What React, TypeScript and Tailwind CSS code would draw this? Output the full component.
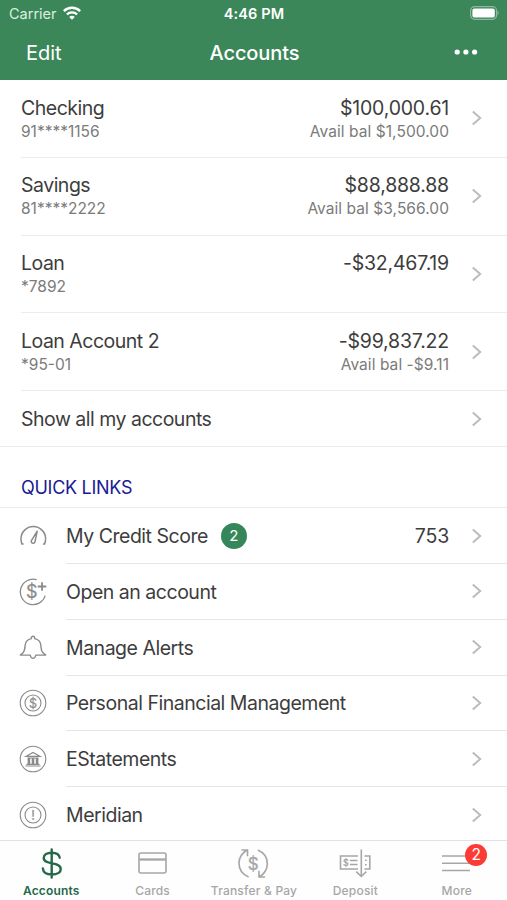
import React from "react";
import clsx from "clsx";

interface Account {
  name: string;
  number: string;
  balance: string;
  available?: string;
}

interface QuickLink {
  label: string;
  icon: React.ReactNode;
  badge?: number;
  value?: string;
}

interface Tab {
  label: string;
  icon: React.ReactNode;
  active?: boolean;
  badge?: number;
}

const accounts: Account[] = [
  {
    name: "Checking",
    number: "91****1156",
    balance: "$100,000.61",
    available: "Avail bal $1,500.00",
  },
  {
    name: "Savings",
    number: "81****2222",
    balance: "$88,888.88",
    available: "Avail bal $3,566.00",
  },
  { name: "Loan", number: "*7892", balance: "-$32,467.19" },
  {
    name: "Loan Account 2",
    number: "*95-01",
    balance: "-$99,837.22",
    available: "Avail bal -$9.11",
  },
];

const Chevron = () => (
  <svg
    className="w-3 h-4 shrink-0 text-[#bcbcbe]"
    viewBox="0 0 12 16"
    fill="none"
    stroke="currentColor"
    strokeWidth="2"
  >
    <path d="M1.8 1.4 9.2 8 1.8 14.6" />
  </svg>
);

const LinkIcon = ({ children }: { children: React.ReactNode }) => (
  <svg
    className="w-7 h-7 shrink-0 text-[#8a8a8a]"
    viewBox="0 0 28 28"
    fill="none"
    stroke="currentColor"
    strokeWidth="1.1"
  >
    {children}
  </svg>
);

const GaugeIcon = () => (
  <LinkIcon>
    <path
      strokeWidth="1.5"
      d="M4.6 22H3C2.3 20.3 2 18.6 2 16.8a12.3 12.3 0 0 1 24.6 0c0 1.8-.3 3.5-1 5.2H24"
    />
    <path
      strokeWidth="1.5"
      strokeLinejoin="round"
      d="M18.2 9.200 12.400 18.600a1.900 1.900 0 1 0 3.500 1.500Z"
    />
  </LinkIcon>
);

const OpenAccountIcon = () => (
  <LinkIcon>
    <path d="M17.600 1.700A12.700 12.700 0 1 0 26.200 17.600" strokeWidth="1.3" />
    <path d="M23 4.200v8.600M18.700 8.500h8.600" strokeWidth="1.800" />
    <text
      x="12.900"
      y="20.300"
      textAnchor="middle"
      fontSize="18"
      fill="currentColor"
      stroke="currentColor"
      strokeWidth=".2"
    >
      $
    </text>
  </LinkIcon>
);

const BellIcon = () => (
  <LinkIcon>
    <path
      strokeLinejoin="round"
      strokeWidth="1.4"
      d="M14 2.2c1 0 1.600.7 1.600 1.500v.9C19.200 5.300 21.600 7.800 21.800 11c.3 4.300.8 5.900 1.700 7.200.8 1.100 2 1.800 3.200 2.900H17c-.6.3-.5 1.100-.9 1.900-.4.800-1.200 1.300-2.100 1.300s-1.700-.5-2.100-1.300c-.4-.8-.3-1.600-.9-1.900H1.300c1.200-1.100 2.400-1.800 3.200-2.900.9-1.300 1.400-2.900 1.700-7.200.2-3.200 2.600-5.700 6.200-6.400v-.9c0-.8.6-1.500 1.600-1.500Z"
    />
  </LinkIcon>
);

const CoinIcon = ({ sign }: { sign: string }) => (
  <LinkIcon>
    <circle cx="14" cy="14" r="12.800" />
    <circle cx="14" cy="14" r="8" />
    <text
      x="14"
      y="18.500"
      textAnchor="middle"
      fontSize="12.500"
      fill="currentColor"
      stroke="currentColor"
      strokeWidth=".2"
    >
      {sign}
    </text>
  </LinkIcon>
);

const BankIcon = () => (
  <LinkIcon>
    <circle cx="14" cy="14" r="12.800" />
    <path d="M6.800 11.400 14 7.400l7.200 4ZM7.500 19.400h13M6.500 21h15M8.500 13h11" />
    <path d="M9.900 13v6.200M14 13v6.200M18.100 13v6.200" strokeWidth="2.600" />
  </LinkIcon>
);

const TabIcon = ({ children }: { children: React.ReactNode }) => (
  <svg
    className="w-9 h-8"
    viewBox="0 0 36 32"
    fill="none"
    stroke="currentColor"
    strokeWidth="1.600"
  >
    {children}
  </svg>
);

const quickLinks: QuickLink[] = [
  { label: "My Credit Score", icon: <GaugeIcon />, badge: 2, value: "753" },
  { label: "Open an account", icon: <OpenAccountIcon /> },
  { label: "Manage Alerts", icon: <BellIcon /> },
  { label: "Personal Financial Management", icon: <CoinIcon sign="$" /> },
  { label: "EStatements", icon: <BankIcon /> },
  { label: "Meridian", icon: <CoinIcon sign="!" /> },
];

const tabs: Tab[] = [
  {
    label: "Accounts",
    active: true,
    icon: (
      <TabIcon>
        <path
          strokeWidth="2.400"
          strokeLinecap="round"
          d="M18.700 1.500v28M26.700 9.700c-.4-3-3.600-5-8-5-4.600 0-8 2-8 5.300 0 7.500 17 3.200 17 10.900 0 3.600-3.800 5.600-8.600 5.600-5.200 0-8.900-2-9.200-6"
        />
      </TabIcon>
    ),
  },
  {
    label: "Cards",
    icon: (
      <TabIcon>
        <rect x="5" y="5" width="27" height="20" rx="2" />
        <path d="M5 11.500h27" strokeWidth="2.300" />
      </TabIcon>
    ),
  },
  {
    label: "Transfer & Pay",
    icon: (
      <TabIcon>
        <path d="M13.600 29C6.500 26 3.800 20 4 14.600 4.200 9.500 7.300 5 12 2M6.500 2h6v6.300M22.800 2c7 3 9.700 9 9.500 14.400-.2 5.100-3.300 9.600-8 12.600M30 29h-6v-6.300" />
        <text
          x="18.200"
          y="21.500"
          textAnchor="middle"
          fontSize="17"
          fill="currentColor"
          stroke="currentColor"
          strokeWidth=".3"
        >
          $
        </text>
      </TabIcon>
    ),
  },
  {
    label: "Deposit",
    icon: (
      <TabIcon>
        <path d="M21 8H3.500v13H21M27.500 8h5.300v13h-5.300M13 12.500h7.500M13 16.500h7.500M24.300 1.500v27M19.300 23.700l5 4.800 5-4.800" />
        <path d="M28.800 11.500V13M28.800 16v1.500" />
        <text
          x="8.800"
          y="17.700"
          textAnchor="middle"
          fontSize="9"
          fill="currentColor"
          stroke="currentColor"
          strokeWidth=".3"
        >
          $
        </text>
      </TabIcon>
    ),
  },
  {
    label: "More",
    badge: 2,
    icon: (
      <TabIcon>
        <path d="M4 8h28M4 15.300h28M4 22.500h28" />
      </TabIcon>
    ),
  },
];

const Header = () => (
  <header className="h-20 shrink-0 bg-[#3b8759] text-white">
    <div className="grid grid-cols-3 items-center h-7 pl-[9px] pr-2">
      <div className="flex items-center gap-1.5">
        <span className="text-[14.5px] leading-5 text-[#d9f0e0]">Carrier</span>
        <svg className="w-[18px] h-[14px] -mt-0.5" viewBox="0 0 18 14" fill="none" stroke="currentColor">
          <path d="M.8 5.100a11.800 11.800 0 0 1 16.400 0" strokeWidth="2.500" />
          <path d="M3.900 8.300a7.500 7.500 0 0 1 10.200 0" strokeWidth="2.300" />
          <path d="M9 13.800 6.200 11a4.200 4.200 0 0 1 5.600 0Z" fill="currentColor" stroke="none" />
        </svg>
      </div>
      <span className="text-center text-[14.5px] leading-5 tracking-[0.1px] font-semibold whitespace-nowrap">
        4:46 PM
      </span>
      <svg className="w-[31px] h-[14px] -mt-0.5 justify-self-end" viewBox="0 0 31 14" fill="none">
        <rect x="2.600" y=".7" width="26" height="12.600" rx="4" stroke="#8cb99c" strokeWidth="1.200" />
        <rect x="4.400" y="2.400" width="22.400" height="9.200" rx="2.200" fill="white" />
        <path d="M29.500 4.800c1.500.6 1.500 3.800 0 4.400Z" fill="#8cb99c" />
      </svg>
    </div>
    <div className="grid grid-cols-3 items-center h-[50px] pl-[26px] pr-[25px]">
      <span className="text-xl">Edit</span>
      <span className="pl-px text-center text-xl tracking-[-0.1px] font-medium">Accounts</span>
      <svg className="w-6 h-2 -mt-0.5 justify-self-end mr-1" viewBox="0 0 24 8" fill="currentColor">
        <circle cx="3.200" cy="4" r="2.600" />
        <circle cx="11.900" cy="4" r="2.600" />
        <circle cx="20.600" cy="4" r="2.600" />
      </svg>
    </div>
  </header>
);

const AccountRow = ({ account }: { account: Account }) => (
  <div className="ml-[21px] pr-6 h-[77.8px] flex items-center border-b border-[#ececec]">
    <div className="flex-1 self-stretch pt-[15.6px]">
      <p className="text-[19.5px] leading-[25px] tracking-[-0.5px]">{account.name}</p>
      <p className="text-[15.5px] leading-[22px] text-[#7b7b7b]">{account.number}</p>
    </div>
    <div className="self-stretch pt-[15.6px] mr-[22px] text-right">
      <p className="text-[19.5px] leading-[25px] tracking-[-0.2px]">{account.balance}</p>
      <p className="text-[15.5px] leading-[22px] tracking-[0.06px] text-[#7b7b7b]">
        {account.available}
      </p>
    </div>
    <Chevron />
  </div>
);

const QuickLinkRow = ({ link }: { link: QuickLink }) => (
  <div className="pl-[19px] h-[55.8px] shrink-0 flex">
    <div className="flex items-center w-[47px]">{link.icon}</div>
    <div className="flex flex-1 items-center pr-6 border-b border-[#e6e6e6]">
      <span className="pt-0.5 text-[19.5px] tracking-[-0.48px]">{link.label}</span>
      {link.badge && (
        <span className="ml-[13px] pt-px flex items-center justify-center w-[26px] h-[26px] rounded-full bg-[#35875a] text-white text-[15px]">
          {link.badge}
        </span>
      )}
      <span className="ml-auto mr-[22px] pt-0.5 text-[19.5px] tracking-[-0.2px]">
        {link.value}
      </span>
      <Chevron />
    </div>
  </div>
);

const TabBar = () => (
  <nav className="h-[60px] shrink-0 grid grid-cols-5 border-t border-[#e2e2e2] bg-[#fefefe]">
    {tabs.map((tab) => (
      <div
        key={tab.label}
        className={clsx(
          "flex flex-col items-center pt-[7px]",
          tab.active ? "text-[#24694a]" : "text-[#a6a6a6]"
        )}
      >
        <div className="relative">
          {tab.icon}
          {tab.badge && (
            <span className="absolute -top-1 left-[27px] flex items-center justify-center w-[22px] h-[22px] rounded-full bg-[#fb3c35] text-white text-[15.5px]">
              {tab.badge}
            </span>
          )}
        </div>
        <span
          className={clsx(
            "mt-[3px] pl-px text-[12px] leading-4 whitespace-nowrap",
            tab.active ? "font-semibold tracking-[0.15px]" : "font-medium tracking-[0.2px]"
          )}
        >
          {tab.label}
        </span>
      </div>
    ))}
  </nav>
);

export default function App() {
  return (
    <div className="w-[507px] h-[900px] flex flex-col overflow-hidden bg-white text-[#3d3d3d] font-[Inter,'Liberation_Sans',sans-serif]">
      <Header />
      <main className="flex-1 min-h-0 overflow-hidden">
        {accounts.map((account) => (
          <AccountRow key={account.name} account={account} />
        ))}
        <div className="h-[56px] pl-[21px] pr-6 flex items-center justify-between border-b border-[#ececec]">
          <span className="pt-0.5 text-[19.5px] tracking-[-0.5px]">Show all my accounts</span>
          <Chevron />
        </div>
        <h2 className="h-[61px] pl-[21px] pt-[27px] text-[18px] leading-7 tracking-[-0.28px] text-[#1a1a94] border-b border-[#ececec]">
          QUICK LINKS
        </h2>
        {quickLinks.map((link) => (
          <QuickLinkRow key={link.label} link={link} />
        ))}
      </main>
      <TabBar />
    </div>
  );
}
